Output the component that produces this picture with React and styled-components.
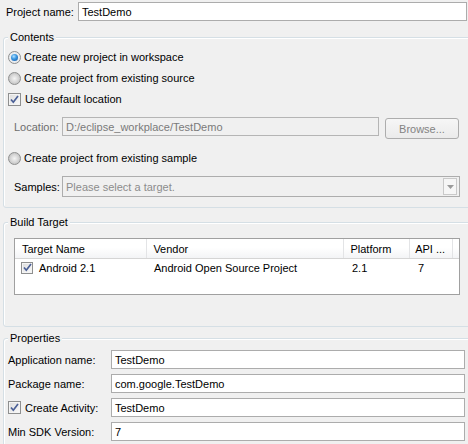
import React from "react";
import styled, { createGlobalStyle, css } from "styled-components";

const Global = createGlobalStyle`
  html, body { margin: 0; padding: 0; background: #f0f0f0; overflow: hidden; }
  body { font-family: "Liberation Sans", Tahoma, Arial, sans-serif; font-size: 11px; color: #000; }
`;

const Page = styled.div`
  width: 468px;
  height: 444px;
  overflow: hidden;
  display: flex;
  flex-direction: column;
`;

const Row = styled.div`
  display: flex;
  align-items: ${(p) => p.$align || "center"};
  height: ${(p) => p.$h || 19}px;
  margin-top: ${(p) => p.$mt || 0}px;
  padding-left: ${(p) => p.$pl || 0}px;
  flex-shrink: 0;
`;

const Label = styled.span`
  width: ${(p) => p.$w}px;
  flex-shrink: 0;
  white-space: nowrap;
  display: flex;
  align-items: center;
  align-self: ${(p) => (p.$top ? "stretch" : "auto")};
  height: ${(p) => (p.$top ? "19px" : "auto")};
  color: ${(p) => (p.$disabled ? "#6d6d6d" : "#000")};
`;

const TextBox = styled.div`
  box-sizing: border-box;
  width: ${(p) => p.$w}px;
  height: ${(p) => p.$h || 19}px;
  border: 1px solid ${(p) => (p.$disabled ? "#b5b5b5" : "#acacac")};
  background: ${(p) => (p.$disabled ? "#f0f0f0" : "#fff")};
  color: ${(p) => (p.$disabled ? "#7a7a7a" : "#000")};
  padding-left: 3px;
  display: flex;
  align-items: center;
  white-space: nowrap;
  overflow: hidden;
  flex-shrink: 0;
`;

const Group = styled.div`
  position: relative;
  box-sizing: border-box;
  width: 475px;
  margin-left: 3px;
  margin-top: ${(p) => p.$mt}px;
  border: 1px solid #d5dfe5;
  border-radius: 3px;
  box-shadow: inset 1px 1px 0 #fff;
  padding-bottom: ${(p) => p.$pb || 0}px;
  display: flex;
  flex-direction: column;
  flex-shrink: 0;
`;

const GroupTitle = styled.span`
  position: absolute;
  top: -7px;
  left: 4px;
  padding: 0 2px;
  line-height: 13px;
  background: #f0f0f0;
`;

const Radio = styled.span`
  box-sizing: border-box;
  width: 13px;
  height: 13px;
  border-radius: 50%;
  border: 1px solid #8e8f8f;
  margin-right: 3px;
  flex-shrink: 0;
  background: radial-gradient(circle at 50% 50%, #f4f4f4 0%, #d9d9d9 45%, #c8c8c8 70%, #eee 100%);
  display: flex;
  align-items: center;
  justify-content: center;
  ${(p) =>
    p.$checked &&
    css`
      background: #e9ecef;
      &::after {
        content: "";
        width: 7px;
        height: 7px;
        border-radius: 50%;
        background: radial-gradient(circle at 40% 35%, #b4e2ff 0%, #3d9ae3 40%, #0d4f9e 100%);
      }
    `}
`;

const CheckBox = styled.span`
  box-sizing: border-box;
  width: ${(p) => p.$size || 13}px;
  height: ${(p) => p.$size || 13}px;
  border: 1px solid #8e8f8f;
  background: linear-gradient(135deg, #dcdcdc 0%, #fbfbfb 100%);
  box-shadow: inset 0 0 0 1px #f4f4f4;
  margin-right: ${(p) => p.$mr ?? 3}px;
  flex-shrink: 0;
  display: flex;
  align-items: center;
  justify-content: center;
`;

const Check = ({ size }) => (
  <CheckBox $size={size} $mr={size === 12 ? 6 : 4}>
    <svg width="9" height="9" viewBox="0 0 9 9">
      <path d="M1 4.5 L3.3 7.2 L8 1" fill="none" stroke="#4a5f96" strokeWidth="1.7" />
    </svg>
  </CheckBox>
);

const Button = styled.div`
  box-sizing: border-box;
  width: 74px;
  height: 21px;
  margin-top: 1px;
  margin-left: 6px;
  border: 1px solid #adadad;
  border-radius: 3px;
  background: linear-gradient(#f6f6f6, #ebebeb);
  color: #838383;
  display: flex;
  align-items: center;
  justify-content: center;
`;

const Combo = styled.div`
  box-sizing: border-box;
  width: 398px;
  height: 21px;
  border: 1px solid #adadad;
  background: #f0f0f0;
  color: #8c8c8c;
  display: flex;
  align-items: center;
  justify-content: space-between;
  padding-left: 3px;
  padding-right: 2px;
`;

const ComboArrow = styled.div`
  box-sizing: border-box;
  width: 14px;
  height: 17px;
  border: 1px solid #c9c9c9;
  background: #f6f6f6;
  display: flex;
  align-items: center;
  justify-content: center;
`;

const Table = styled.div`
  box-sizing: border-box;
  width: 446px;
  height: 57px;
  margin-top: 15px;
  margin-left: 10px;
  border: 1px solid #a0a0a0;
  background: #fff;
  display: flex;
  flex-direction: column;
`;

const HeaderRow = styled.div`
  display: flex;
  height: 20px;
  box-sizing: border-box;
  border-bottom: 1px solid #d5d5d5;
  background: linear-gradient(#ffffff 0%, #ffffff 45%, #f3f4f6 100%);
`;

const HeaderCell = styled.div`
  box-sizing: border-box;
  width: ${(p) => p.$w}px;
  padding-left: ${(p) => p.$pl ?? 6}px;
  border-right: ${(p) => (p.$last ? "none" : "1px solid #e3e4e6")};
  display: flex;
  align-items: center;
  white-space: nowrap;
`;

const DataRow = styled.div`
  display: flex;
  height: 17px;
`;

const DataCell = styled.div`
  box-sizing: border-box;
  width: ${(p) => p.$w}px;
  padding-left: ${(p) => p.$pl ?? 6}px;
  display: flex;
  align-items: center;
  white-space: nowrap;
`;

const cols = [133, 198, 66, 43];

export default function App() {
  return (
    <Page>
      <Global />
      <Row $mt={2} $pl={6}>
        <Label $w={72}>Project name:</Label>
        <TextBox $w={389}>TestDemo</TextBox>
      </Row>

      <Group $mt={16} $pb={10}>
        <GroupTitle>Contents</GroupTitle>
        <Row $mt={11} $h={16} $pl={4}>
          <Radio $checked />
          Create new project in workspace
        </Row>
        <Row $mt={5} $h={16} $pl={4}>
          <Radio />
          Create project from existing source
        </Row>
        <Row $mt={5} $h={16} $pl={4}>
          <Check />
          Use default location
        </Row>
        <Row $mt={10} $h={22} $pl={10} $align="flex-start">
          <Label $w={48} $disabled $top>Location:</Label>
          <TextBox $w={317} $disabled>D:/eclipse_workplace/TestDemo</TextBox>
          <Button>Browse...</Button>
        </Row>
        <Row $mt={11} $h={16} $pl={4}>
          <Radio />
          Create project from existing sample
        </Row>
        <Row $mt={10} $h={21} $pl={10}>
          <Label $w={48}>Samples:</Label>
          <Combo>
            Please select a target.
            <ComboArrow>
              <svg width="7" height="4" viewBox="0 0 7 4">
                <path d="M0 0 H7 L3.5 4 Z" fill="#9a9a9a" />
              </svg>
            </ComboArrow>
          </Combo>
        </Row>
      </Group>

      <Group $mt={14} $pb={31}>
        <GroupTitle>Build Target</GroupTitle>
        <Table>
          <HeaderRow>
            <HeaderCell $w={cols[0]} $pl={7}>Target Name</HeaderCell>
            <HeaderCell $w={cols[1]}>Vendor</HeaderCell>
            <HeaderCell $w={cols[2]}>Platform</HeaderCell>
            <HeaderCell $w={cols[3]} $pl={5}>API ...</HeaderCell>
            <HeaderCell $w={5} $last />
          </HeaderRow>
          <DataRow>
            <DataCell $w={cols[0]}>
              <Check size={12} />
              Android 2.1
            </DataCell>
            <DataCell $w={cols[1]}>Android Open Source Project</DataCell>
            <DataCell $w={cols[2]}>2.1</DataCell>
            <DataCell $w={cols[3]}>7</DataCell>
          </DataRow>
        </Table>
      </Group>

      <Group $mt={11} $pb={10}>
        <GroupTitle>Properties</GroupTitle>
        <Row $mt={11} $pl={4}>
          <Label $w={103}>Application name:</Label>
          <TextBox $w={354}>TestDemo</TextBox>
        </Row>
        <Row $mt={5} $pl={4}>
          <Label $w={103}>Package name:</Label>
          <TextBox $w={354}>com.google.TestDemo</TextBox>
        </Row>
        <Row $mt={5} $pl={4}>
          <Label $w={103}>
            <Check />
            Create Activity:
          </Label>
          <TextBox $w={354}>TestDemo</TextBox>
        </Row>
        <Row $mt={5} $pl={4}>
          <Label $w={103}>Min SDK Version:</Label>
          <TextBox $w={354}>7</TextBox>
        </Row>
      </Group>
    </Page>
  );
}
